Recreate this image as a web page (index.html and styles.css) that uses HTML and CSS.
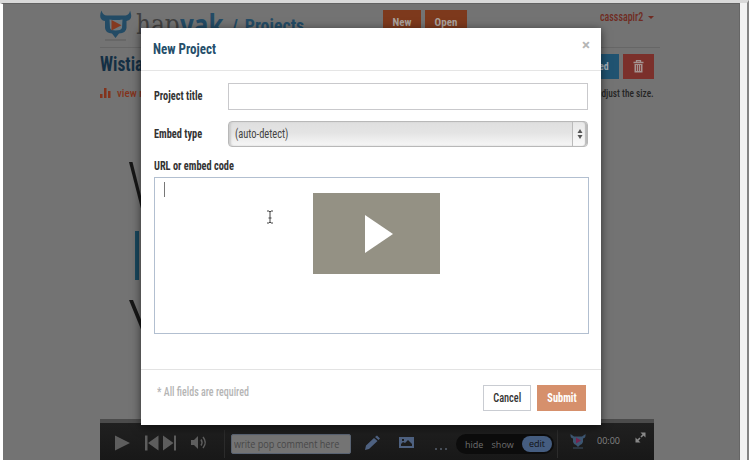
FILE: index.html
```html
<!DOCTYPE html>
<html lang="en">
<head>
<meta charset="utf-8">
<title>New Project</title>
<link rel="stylesheet" href="styles.css">
</head>
<body>
<div class="browser">
<div class="page">
  <header class="top">
    <svg class="logo" width="32" height="31" viewBox="0 0 32 31"><path d="M1.500 .5C-1 6 0 10 5 11V18Q5.500 23 12 23.500L15.500 28 19 23.500Q26 23 26.500 18V11C32 10 32 6 30 .5 29.500 4 28 5.500 24 5.500H7C4 5.500 2.500 4 1.500 .5Z" fill="#234b65"/><path d="M9.500 9.500Q16 10.500 22.500 9.500L22 18Q21 20.500 15.500 20.500 10.500 20.500 10 18Z" fill="#6d777c"/><path d="M11.500 10V20.500L21.500 15.200Z" fill="#85391f"/><path d="M5 30H26" stroke="#5c5c5c"/></svg>
    <div class="brand"><span class="hap">hap</span><span class="yak">yak</span></div>
    <div class="crumb"><span class="slash">/</span> Projects</div>
    <div class="new">New</div><div class="new open">Open</div>
    <div class="user"><span class="t">casssapir2</span><i></i></div>
  </header>
  <div class="titlebar"><h1>Wistia</h1><div class="embed"><span class="t">ed</span></div><div class="trash"><svg width="11" height="14" viewBox="0 0 11 14"><path d="M.5 2.500H10.500M3.500 2V.7H7.500V2" fill="none" stroke="#a59391" stroke-width="1.300"/><path d="M1.500 4H9.500V12.500H1.500Z" fill="#a59391"/><path d="M3.500 5V11M5.500 5V11M7.500 5V11" stroke="#7b302b" stroke-width=".8"/></svg></div></div>
  <div class="info"><svg width="11" height="10" viewBox="0 0 11 10"><path d="M0 6H2.500V10H0ZM4 0H6.500V10H4ZM8 3H10.500V10H8Z" fill="#83331c"/></svg><span class="view">view r</span><span class="adjust">adjust the size.</span></div>
  <div class="stage"><svg width="60" height="200" viewBox="0 0 60 200"><path d="M29 12H32.500L49 78H46Z" fill="#171717"/><rect x="35" y="81" width="4" height="49" fill="#19475d"/><path d="M29 150H33L51 194H47Z" fill="#171717"/></svg></div>
  <div class="player">
    <svg class="transport" width="131" height="37" viewBox="0 0 131 37"><g fill="#5d5d5d"><path d="M15 12.500V27.500L30 20ZM45 12.500H47.500V27.500H45ZM58.500 12.500V27.500L48 20ZM63 12.500V27.500L73.500 20ZM74 12.500H76V27.500H74ZM91 17H94L98 13V26L94 22H91Z"/></g><path d="M101 16.500Q103 19.500 101 22.500M103 14Q107.500 19.500 103 25" fill="none" stroke="#5d5d5d" stroke-width="1.500"/><path d="M124.500 7V35" stroke="#2b2b2b"/></svg>
    <div class="comment"><span>write pop comment here</span></div>
    <svg class="tools" width="107" height="37" viewBox="0 0 107 37"><g fill="#4e6180"><path d="M14 27L15 22.500 23 15 26.500 18 18 26ZM24 14L26 12.500 29 15.500 27.500 17Z"/><path fill-rule="evenodd" d="M48 14H63V25H48ZM50 23H61V21L57 17 54 20 52 19 50 21ZM51 16V18H53V16Z"/></g><path d="M84 26H86M89 26H91M94 26H96" stroke="#57606e" stroke-width="1.500"/></svg>
    <div class="modes"><span>hide</span><span>show</span><b>edit</b></div>
    <div class="end"><svg width="16" height="15" viewBox="0 0 16 15"><path d="M.5 0Q0 4 3 4.500V8Q4 11 6 11L8 13 10 11Q12 11 13 8V4.500Q16 4 15.500 0L12 2.500H4Z" fill="#3c5570"/><path d="M6 3.500V9.500L11 6.500Z" fill="#74244f"/><path d="M3 14H13" stroke="#3d5064"/></svg><span>00:00</span><svg class="full" width="11" height="11" viewBox="0 0 11 11"><path d="M5.500 .5H10.500V5.500ZM.5 5.500V10.500H5.500Z" fill="#888"/><path d="M9 2L6 5M2 9L5 6" stroke="#888" stroke-width="1.600"/></svg></div>
  </div>
</div>
</div>
<section class="modal">
  <header><h2 class="t">New Project</h2><span class="close">×</span></header>
  <form class="form">
    <div class="row"><label><span class="t">Project title</span></label><div class="input"></div></div>
    <div class="row sel"><label><span class="t">Embed type</span></label><div class="select"><span class="t">(auto-detect)</span><div class="arrows"><svg width="6" height="10" viewBox="0 0 6 10"><path d="M3 0L5.500 4H.5ZM3 10L5.500 6H.5Z" fill="#555"/></svg></div></div></div>
    <label class="url"><span class="t">URL or embed code</span></label>
    <div class="area"><i class="caret"></i></div>
  </form>
  <footer><span class="t req">* All fields are required</span><div class="btn"><span>Cancel</span></div><div class="btn submit"><span>Submit</span></div></footer>
</section>
<svg class="cursor" width="8" height="14" viewBox="0 0 8 14"><path d="M1 1H3L4 2 5 1H7M4 2V12M1 13H3L4 12 5 13H7M2.500 8H5.500" fill="none" stroke="#444"/></svg>
<div class="play"><svg width="28" height="38" viewBox="0 0 28 38"><path d="M0 0L28 19 0 38Z" fill="#fff"/></svg></div>
</body>
</html>
```
FILE: styles.css
```css
* { box-sizing: border-box; }
body { margin: 0; width: 750px; height: 460px; overflow: hidden; background: #fff; font-family: "Roboto Condensed", Roboto, sans-serif; font-stretch: 75%; font-size: 11px; position: relative; }
h1, h2 { margin: 0; }
.t { display: inline-block; white-space: nowrap; transform-origin: left; transform: scaleX(.87); }
.browser { width: 749px; height: 460px; border-top: 3px solid #d9d9d9; border-right: 2px solid #858585; background: #f3f3f3; padding-right: 7px; }
.page { height: 457px; border-left: 3px solid #fff; background: #737373; border-top: 1px solid #626262; border-right: 1px solid #666; padding-left: 97px; overflow: hidden; }
.top { width: 560px; height: 44px; border-bottom: 1px solid #666; display: flex; padding-top: 6px; white-space: nowrap; }
.logo { flex: none; }
.brand { width: 96px; margin-left: 4px; font-size: 30px; line-height: 30px; height: 30px; display: flex; }
.hap { font-family: "DejaVu Serif", serif; font-size: 28px; color: #404040; width: 44px; transform: scaleX(.83); transform-origin: left; font-stretch: 100%; }
.yak { font-family: "Open Sans", sans-serif; font-stretch: 100%; font-weight: 700; color: #234b65; transform: scaleX(.81); transform-origin: left; }
.crumb { width: 151px; font-size: 19px; font-weight: 700; line-height: 31px; color: #234b65; transform: scaleX(.94); transform-origin: left; }
.slash { margin-right: 3px; }
.new { flex: none; width: 38px; height: 26px; background: #7d391c; color: #aaa19c; text-align: center; line-height: 25px; font-weight: 700; }
.open { width: 42px; margin-left: 4px; }
.user { margin-left: 133px; font-size: 12px; line-height: 14px; font-weight: 500; color: #702b22; display: flex; align-items: center; height: 14px; width: 60px; }
.user .t { width: 48px; transform: scaleX(.83); }
.user i { border: 3px solid transparent; border-top-color: #702b22; margin-top: 4px; }
.titlebar { width: 554px; display: flex; height: 31px; padding-top: 6px; }
h1 { font-size: 20px; line-height: 20px; color: #142f44; flex: 1; transform: scaleX(.87); transform-origin: left; }
.embed, .trash { height: 25px; background: #205371; display: flex; align-items: center; }
.embed { width: 60px; justify-content: flex-end; padding-right: 9px; margin-right: 4px; color: #a6b2bb; font-weight: 700; }
.embed .t { transform: scaleX(.9); }
.trash { width: 31px; background: #7b302b; justify-content: center; }
.info { width: 554px; height: 27px; padding-top: 1px; display: flex; align-items: center; }
.view { color: #83331c; margin-left: 6px; font-weight: 500; flex: 1; white-space: nowrap; }
.adjust { color: #252525; font-weight: 500; transform: scaleX(.85); transform-origin: right; }
.stage { height: 313px; padding-top: 44px; }
.player { width: 554px; height: 41px; border-top: 4px solid #4b4b4b; background: linear-gradient(#202020, #181818); display: flex; font-family: "Open Sans", sans-serif; font-stretch: 100%; }
.transport, .tools { flex: none; }
.comment { width: 120px; height: 20px; margin-top: 11px; background: #747474; border: 1px solid #596372; border-radius: 2px; line-height: 17px; padding-left: 2px; color: #484848; white-space: nowrap; flex: none; }
.comment span { display: inline-block; font-size: 10px; transform: scaleX(.91); transform-origin: left; }
.modes { flex: none; width: 98px; height: 20px; margin: 11px 0 0 -2px; border-radius: 10px; background: #0c0c0c; display: flex; align-items: center; justify-content: space-between; color: #6e6e6e; font-size: 9px; padding: 0 2px 0 9px; }
.modes b { width: 30px; height: 16px; border-radius: 8px; background: #455d80; color: #111; line-height: 15px; text-align: center; font-weight: 400; }
.end { border-left: 1px solid #2c2c2c; margin: 7px 0 0 3px; height: 28px; flex: 1; display: flex; padding: 4px 0 0 12px; gap: 11px; color: #858585; font-size: 9px; line-height: 13px; }
.end span { width: 27px; }
.full { margin-top: -2px; }
.modal { position: absolute; left: 141px; top: 28px; width: 460px; height: 397px; background: #fff; box-shadow: 0 2px 9px rgba(0,0,0,.6); display: flex; flex-direction: column; }
.modal header { height: 43px; border-bottom: 1px solid #e5e5e5; display: flex; justify-content: space-between; padding: 12px 11px 0 12px; }
h2 { font-size: 15px; line-height: 19px; height: 19px; color: #264f6b; font-weight: 700; }
.close { color: #b5b5b5; font: 700 15px/10px Roboto, sans-serif; }
.form { padding: 12px 12px 0 13px; flex: 1; }
.row { display: flex; height: 26px; align-items: center; color: #333; font-weight: 700; margin-right: 1px; }
.row label { width: 74px; }
label .t { font-size: 12px; transform: scaleX(.86); }
.sel { margin-top: 12px; }
.input { flex: 1; height: 27px; border: 1px solid #c9c9cc; }
.select { flex: 1; height: 26px; border: 1px solid #b8b8b8; border-radius: 4px; background: linear-gradient(#dfdfdf, #e4e4e4 45%, #f7f7f7); box-shadow: inset 2px 0 2px #ccc; display: flex; justify-content: space-between; align-items: center; font-weight: 400; font-size: 12px; padding-left: 6px; color: #444; }
.arrows { width: 15px; height: 24px; border-left: 1px solid #bbb; display: flex; align-items: center; justify-content: center; background: linear-gradient(#e8e8e8, #fafafa); border-radius: 0 3px 3px 0; box-shadow: inset -2px 0 1px #bbb; }
.url { display: block; height: 30px; padding-top: 12px; line-height: 15px; font-weight: 700; color: #333; }
.area { height: 157px; border: 1px solid #b2bfd0; padding: 4px 9px; }
.caret { display: block; width: 1px; height: 15px; background: #777; }
.modal footer { height: 56px; border-top: 1px solid #e3e3e3; display: flex; padding: 15px 15px 0 16px; color: #333; font-weight: 500; }
.req { flex: 1; color: #b5b5b5; line-height: 14px; font-size: 12px; transform: scaleX(.835); }
.btn { width: 48px; height: 26px; border: 1px solid #c9ccd2; display: flex; align-items: center; justify-content: center; font-size: 12px; }
.btn span { transform: scaleX(.86); }
.submit { margin-left: 6px; width: 49px; background: #d6906c; border-color: #d6906c; color: #fff; font-weight: 700; }
.cursor { position: absolute; left: 266px; top: 210px; }
.play { position: absolute; left: 313px; top: 193px; width: 127px; height: 81px; background: #949184; display: flex; align-items: center; padding-left: 52px; }
```
